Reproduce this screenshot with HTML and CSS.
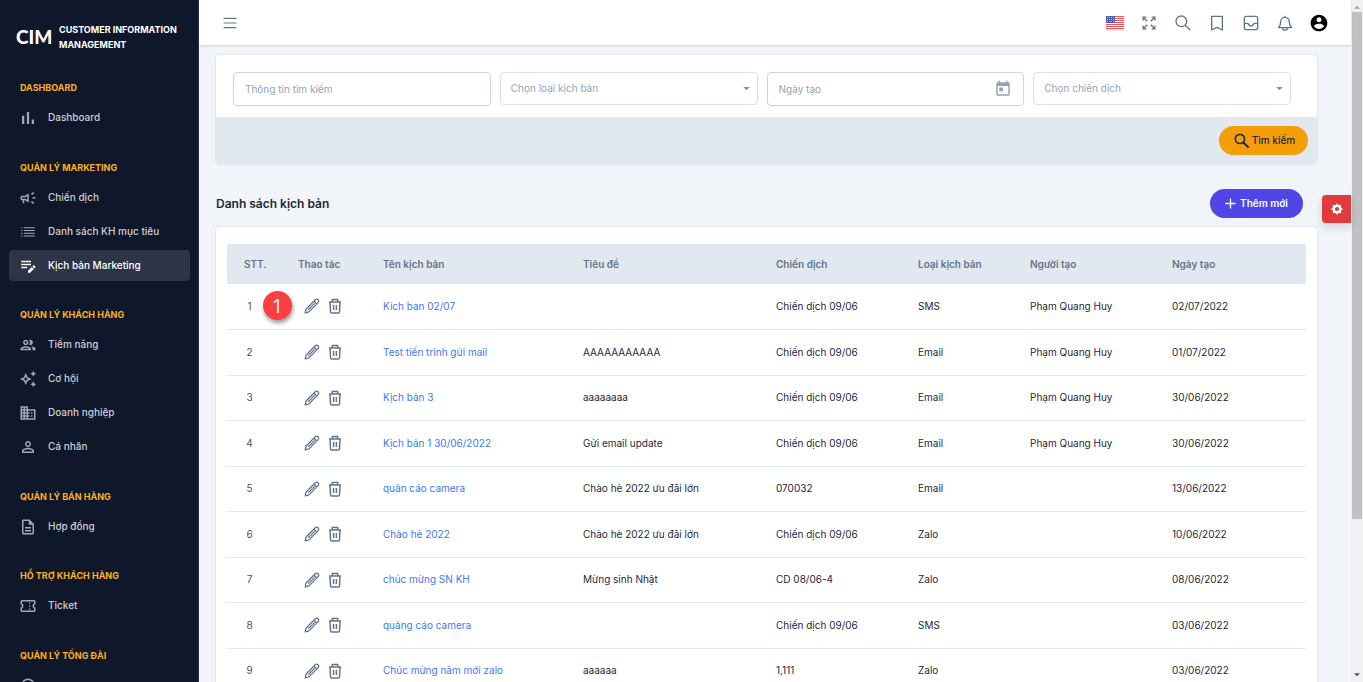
FILE: index.html
```html
<!DOCTYPE html>
<html lang="vi">
<head>
<meta charset="utf-8">
<meta name="viewport" content="width=device-width, initial-scale=1">
<title>CIM - Danh sách kịch bản</title>
<link rel="stylesheet" href="styles.css">
</head>
<body>
<svg class="sprite" aria-hidden="true">
  <symbol id="i-bars" viewBox="0 0 24 24"><path d="M4 9h3v11H4zM10.500 4h3v16h-3zM17 14h3v6h-3z"/></symbol>
  <symbol id="i-horn" viewBox="0 0 24 24"><path d="M18 11v2h4v-2h-4zm-2 6.610c.96.710 2.210 1.650 3.200 2.390.4-.53.8-1.070 1.200-1.600-.99-.74-2.240-1.680-3.200-2.400-.4.540-.8 1.080-1.200 1.610zM20.400 5.600c-.4-.53-.8-1.070-1.200-1.600-.99.740-2.240 1.680-3.200 2.400.4.530.8 1.070 1.200 1.600.96-.72 2.210-1.650 3.200-2.400zM4 9c-1.100 0-2 .9-2 2v2c0 1.100.9 2 2 2h1v4h2v-4h1l5 3V6L8 9H4zm5.030 1.710L11 9.530v4.940l-1.970-1.180-.48-.29H4v-2h4.550l.48-.29z"/></symbol>
  <symbol id="i-list" viewBox="0 0 24 24"><path d="M3 5.500h1.600v1.600H3zM3 9.200h1.600v1.600H3zM3 12.900h1.600v1.600H3zM3 16.600h1.600v1.600H3zM6.500 5.500H21v1.500H6.500zM6.500 9.200H21v1.500H6.500zM6.500 12.900H21v1.500H6.500zM6.500 16.600H21v1.500H6.500z"/></symbol>
  <symbol id="i-note" viewBox="0 0 24 24"><path d="M3 5h13v2H3zM3 9h13v2H3zM3 13h8v2H3zM21.700 12.700l-1.400-1.400a1 1 0 0 0-1.400 0l-1.100 1.100 2.800 2.800 1.100-1.100a1 1 0 0 0 0-1.400zM12 18.200V21h2.800l5-5-2.800-2.800z"/></symbol>
  <symbol id="i-group" viewBox="0 0 24 24"><path d="M9 13.750c-2.340 0-7 1.170-7 3.500V19h14v-1.750c0-2.330-4.660-3.500-7-3.500zM4.340 17c.84-.58 2.870-1.250 4.660-1.250s3.820.67 4.660 1.250H4.340zM9 12c1.930 0 3.500-1.570 3.500-3.500S10.930 5 9 5 5.500 6.570 5.500 8.500 7.070 12 9 12zm0-5c.83 0 1.500.67 1.500 1.500S9.830 10 9 10s-1.500-.67-1.500-1.500S8.170 7 9 7zm7.040 6.810c1.160.84 1.960 1.960 1.960 3.440V19h4v-1.750c0-2.020-3.500-3.170-5.960-3.440zM15 12c1.930 0 3.500-1.570 3.500-3.500S16.930 5 15 5c-.54 0-1.040.13-1.500.35.63.89 1 1.980 1 3.150s-.37 2.260-1 3.150c.46.22.96.35 1.500.35z"/></symbol>
  <symbol id="i-spark" viewBox="0 0 24 24"><path d="M19 9l1.250-2.750L23 5l-2.750-1.250L19 1l-1.250 2.750L15 5l2.750 1.250L19 9zm0 6l-1.250 2.750L15 19l2.750 1.250L19 23l1.250-2.750L23 19l-2.750-1.250L19 15zm-7.500-5.500L9 4 6.500 9.500 1 12l5.500 2.500L9 20l2.500-5.500L17 12l-5.500-2.500zm-1.510 3.490L9 15.170l-.99-2.180L5.830 12l2.180-.99L9 8.830l.99 2.180 2.180.99-2.180.99z"/></symbol>
  <symbol id="i-building" viewBox="0 0 24 24"><path d="M12 7V3H2v18h20V7H12zM6 19H4v-2h2v2zm0-4H4v-2h2v2zm0-4H4V9h2v2zm0-4H4V5h2v2zm4 12H8v-2h2v2zm0-4H8v-2h2v2zm0-4H8V9h2v2zm0-4H8V5h2v2zm10 12h-8v-2h2v-2h-2v-2h2v-2h-2V9h8v10zm-2-8h-2v2h2v-2zm0 4h-2v2h2v-2z"/></symbol>
  <symbol id="i-person" viewBox="0 0 24 24"><path d="M12 5.900a2.100 2.100 0 1 1 0 4.200 2.100 2.100 0 0 1 0-4.200m0 9c2.970 0 6.100 1.460 6.100 2.100v1.100H5.900V17c0-.64 3.130-2.100 6.100-2.100M12 4C9.790 4 8 5.790 8 8s1.790 4 4 4 4-1.790 4-4-1.790-4-4-4zm0 9c-2.670 0-8 1.340-8 4v3h16v-3c0-2.660-5.330-4-8-4z"/></symbol>
  <symbol id="i-doc" viewBox="0 0 24 24"><path d="M8 16h8v2H8zm0-4h8v2H8zm6-10H6c-1.100 0-2 .9-2 2v16c0 1.100.89 2 1.990 2H18c1.100 0 2-.9 2-2V8l-6-6zm4 18H6V4h7v5h5v11z"/></symbol>
  <symbol id="i-ticket" viewBox="0 0 24 24"><path d="M22 10V6c0-1.110-.9-2-2-2H4c-1.100 0-1.990.89-1.990 2v4c1.100 0 1.990.9 1.990 2s-.89 2-2 2v4c0 1.100.9 2 2 2h16c1.100 0 2-.9 2-2v-4c-1.100 0-2-.9-2-2s.9-2 2-2zm-2-1.460c-1.190.69-2 1.990-2 3.460s.81 2.770 2 3.460V18H4v-2.540c1.190-.69 2-1.990 2-3.460 0-1.480-.8-2.770-1.990-3.460L4 6h16v2.540zM13.500 15h1.500v2h-1.500zm0-4h1.500v2h-1.500zm0-4h1.500v2h-1.500z"/></symbol>
  <symbol id="i-agent" viewBox="0 0 24 24"><path d="M12 2a9 9 0 0 0-9 9v8h5v-7H5v-1a7 7 0 0 1 14 0v1h-3v7h5v-8a9 9 0 0 0-9-9z"/></symbol>
  <symbol id="i-menu" viewBox="0 0 24 24"><path d="M1 4h22M1 12h22M1 20h22" fill="none" stroke="currentColor" stroke-width="2"/></symbol>
  <symbol id="i-expand" viewBox="0 0 24 24"><path d="M2 7.500V2h5.500M2 2l7 7M16.500 2H22v5.500M22 2l-7 7M2 16.500V22h5.500M2 22l7-7M22 16.500V22h-5.500M22 22l-7-7" fill="none" stroke="currentColor" stroke-width="2.400"/></symbol>
  <symbol id="i-search" viewBox="0 0 24 24"><circle cx="9.500" cy="9.500" r="8" fill="none" stroke="currentColor" stroke-width="2"/><path d="M15.200 15.200L23 23" fill="none" stroke="currentColor" stroke-width="2"/></symbol>
  <symbol id="i-search-bold" viewBox="0 0 24 24"><circle cx="9.500" cy="9.500" r="5.500" fill="none" stroke="currentColor" stroke-width="2"/><path d="M13.500 13.500l6.500 6.500" fill="none" stroke="currentColor" stroke-width="2.400"/></symbol>
  <symbol id="i-bookmark" viewBox="0 0 24 24"><path d="M4 2h16v20.500l-8-4-8 4z" fill="none" stroke="currentColor" stroke-width="2" stroke-linejoin="round"/></symbol>
  <symbol id="i-inbox" viewBox="0 0 24 24"><rect x="2" y="2" width="20" height="20" rx="3" fill="none" stroke="currentColor" stroke-width="2"/><path d="M2 12.500h5c1.300 0 1.300 4 5 4s3.700-4 5-4h5" fill="none" stroke="currentColor" stroke-width="2"/></symbol>
  <symbol id="i-bell" viewBox="0 0 24 24"><path d="M2 19c2.500-2 3.500-4 3.500-9a6.500 6.500 0 0 1 13 0c0 5 1 7 3.500 9zM12 3.500V1M8.500 20c.3 3.600 6.700 3.600 7 0" fill="none" stroke="currentColor" stroke-width="2" stroke-linejoin="round"/></symbol>
  <symbol id="i-user" viewBox="0 0 24 24"><path d="M12 2C6.480 2 2 6.480 2 12s4.480 10 10 10 10-4.480 10-10S17.520 2 12 2zm0 3c1.660 0 3 1.340 3 3s-1.340 3-3 3-3-1.340-3-3 1.340-3 3-3zm0 14.200c-2.500 0-4.710-1.280-6-3.220.03-1.990 4-3.080 6-3.080 1.990 0 5.970 1.090 6 3.080-1.290 1.940-3.500 3.220-6 3.220z"/></symbol>
  <symbol id="i-calendar" viewBox="0 0 24 24"><path d="M19 3h-1V1h-2v2H8V1H6v2H5c-1.110 0-1.990.9-1.990 2L3 19c0 1.100.89 2 2 2h14c1.100 0 2-.9 2-2V5c0-1.100-.9-2-2-2zm0 16H5V8h14v11zM7 10h5v5H7z"/></symbol>
  <symbol id="i-caret" viewBox="0 0 10 6"><path d="M0 0h10L5 5z"/></symbol>
  <symbol id="i-plus" viewBox="0 0 12 12"><path d="M6 1v10M1 6h10" fill="none" stroke="currentColor" stroke-width="1.400" stroke-linecap="round"/></symbol>
  <symbol id="i-gear" viewBox="0 0 20 20"><path fill-rule="evenodd" d="M11.490 3.170c-.38-1.560-2.600-1.560-2.980 0a1.532 1.532 0 01-2.286.948c-1.372-.836-2.942.734-2.106 2.106.540.886.061 2.042-.947 2.287-1.561.379-1.561 2.600 0 2.978a1.532 1.532 0 01.947 2.287c-.836 1.372.734 2.942 2.106 2.106a1.532 1.532 0 012.287.947c.379 1.561 2.600 1.561 2.978 0a1.533 1.533 0 012.287-.947c1.372.836 2.942-.734 2.106-2.106a1.533 1.533 0 01.947-2.287c1.561-.379 1.561-2.600 0-2.978a1.532 1.532 0 01-.947-2.287c.836-1.372-.734-2.942-2.106-2.106a1.532 1.532 0 01-2.287-.947zM10 13a3 3 0 100-6 3 3 0 000 6z"/></symbol>
  <symbol id="i-edit" viewBox="0 0 16 16"><path d="M1.200 14.800l.9-3.800L11.300 1.800a1.900 1.900 0 0 1 2.800 2.800L5 13.900zM10 3.200L12.800 6M10.600 5.400L4.300 11.700" fill="none" stroke="currentColor" stroke-width="1.300" stroke-linejoin="round"/></symbol>
  <symbol id="i-trash" viewBox="0 0 16 16"><path d="M2 4h12M5.300 4V1.500h5.400V4M3 4l.5 9.800a1.300 1.300 0 0 0 1.300 1.200h6.400a1.300 1.300 0 0 0 1.300-1.200L13 4M6.600 7v5M9.400 7v5" fill="none" stroke="currentColor" stroke-width="1.500" stroke-linejoin="round"/></symbol>
  <symbol id="i-flag" viewBox="0 0 18 13"><path fill="#f5f5f5" d="M0 0h18v13H0z"/><path fill="#e25c60" d="M0 0h18v1H0zM0 2h18v1H0zM0 4h18v1H0zM0 6h18v1H0zM0 8h18v1H0zM0 10h18v1H0zM0 12h18v1H0z"/><path fill="#4a5aa8" d="M0 0h9v7H0z"/><path d="M1 1.500h8M1 3.500h8M1 5.500h8" stroke="#b9c2e2" stroke-dasharray="1 1"/></symbol>
</svg>

<div class="app">
  <aside class="sidebar">
    <div class="brand">
      <span class="brand-logo">CIM</span>
      <span class="brand-name">CUSTOMER INFORMATION MANAGEMENT</span>
    </div>
    <nav class="menu">
      <section class="menu-group">
        <h2 class="menu-title">DASHBOARD</h2>
        <a class="menu-item" href="#"><svg class="menu-icon"><use href="#i-bars"/></svg>Dashboard</a>
      </section>
      <section class="menu-group">
        <h2 class="menu-title">QUẢN LÝ MARKETING</h2>
        <a class="menu-item" href="#"><svg class="menu-icon"><use href="#i-horn"/></svg>Chiến dịch</a>
        <a class="menu-item" href="#"><svg class="menu-icon"><use href="#i-list"/></svg>Danh sách KH mục tiêu</a>
        <a class="menu-item menu-item-active" href="#"><svg class="menu-icon"><use href="#i-note"/></svg>Kịch bản Marketing</a>
      </section>
      <section class="menu-group">
        <h2 class="menu-title">QUẢN LÝ KHÁCH HÀNG</h2>
        <a class="menu-item" href="#"><svg class="menu-icon"><use href="#i-group"/></svg>Tiềm năng</a>
        <a class="menu-item" href="#"><svg class="menu-icon"><use href="#i-spark"/></svg>Cơ hội</a>
        <a class="menu-item" href="#"><svg class="menu-icon"><use href="#i-building"/></svg>Doanh nghiệp</a>
        <a class="menu-item" href="#"><svg class="menu-icon"><use href="#i-person"/></svg>Cá nhân</a>
      </section>
      <section class="menu-group">
        <h2 class="menu-title">QUẢN LÝ BÁN HÀNG</h2>
        <a class="menu-item" href="#"><svg class="menu-icon"><use href="#i-doc"/></svg>Hợp đồng</a>
      </section>
      <section class="menu-group">
        <h2 class="menu-title">HỖ TRỢ KHÁCH HÀNG</h2>
        <a class="menu-item" href="#"><svg class="menu-icon"><use href="#i-ticket"/></svg>Ticket</a>
      </section>
      <section class="menu-group">
        <h2 class="menu-title">QUẢN LÝ TỔNG ĐÀI</h2>
        <a class="menu-item" href="#" aria-label="Agent"><svg class="menu-icon"><use href="#i-agent"/></svg></a>
      </section>
    </nav>
  </aside>

  <div class="page">
    <header class="topbar">
      <button class="icon-button" type="button" aria-label="Menu"><svg class="icon-small"><use href="#i-menu"/></svg></button>
      <div class="topbar-tools">
        <button class="icon-button" type="button" aria-label="English"><svg class="flag"><use href="#i-flag"/></svg></button>
        <button class="icon-button" type="button" aria-label="Fullscreen"><svg class="icon-small"><use href="#i-expand"/></svg></button>
        <button class="icon-button" type="button" aria-label="Search"><svg class="icon-medium"><use href="#i-search"/></svg></button>
        <button class="icon-button" type="button" aria-label="Bookmarks"><svg class="icon-medium"><use href="#i-bookmark"/></svg></button>
        <button class="icon-button" type="button" aria-label="Messages"><svg class="icon-medium"><use href="#i-inbox"/></svg></button>
        <button class="icon-button" type="button" aria-label="Notifications"><svg class="icon-medium"><use href="#i-bell"/></svg></button>
        <button class="icon-button icon-button-user" type="button" aria-label="Account"><svg class="icon-large"><use href="#i-user"/></svg></button>
      </div>
    </header>

    <main class="content">
      <form class="card filter">
        <div class="filter-fields">
          <div class="field field-text"><input class="field-input" type="text" placeholder="Thông tin tìm kiếm" aria-label="Thông tin tìm kiếm"></div>
          <div class="field"><select class="field-select" aria-label="Chọn loại kịch bản"><option>Chọn loại kịch bản</option></select><svg class="field-caret"><use href="#i-caret"/></svg></div>
          <div class="field field-text"><input class="field-input" type="text" placeholder="Ngày tạo" aria-label="Ngày tạo"><button class="field-button" type="button" aria-label="Calendar"><svg class="icon-calendar"><use href="#i-calendar"/></svg></button></div>
          <div class="field"><select class="field-select" aria-label="Chọn chiến dịch"><option>Chọn chiến dịch</option></select><svg class="field-caret"><use href="#i-caret"/></svg></div>
        </div>
        <div class="filter-actions">
          <button class="button button-search" type="button"><svg class="icon-large"><use href="#i-search-bold"/></svg>Tìm kiếm</button>
        </div>
      </form>

      <div class="heading">
        <h1 class="heading-title">Danh sách kịch bản</h1>
        <button class="button button-add" type="button"><svg class="icon-plus"><use href="#i-plus"/></svg>Thêm mới</button>
      </div>

      <section class="card list">
        <table class="table">
          <colgroup><col class="col-no"><col class="col-actions"><col class="col-name"><col class="col-subject"><col class="col-campaign"><col class="col-type"><col class="col-author"><col></colgroup>
          <thead>
            <tr><th>STT.</th><th>Thao tác</th><th>Tên kịch bản</th><th>Tiêu đề</th><th>Chiến dịch</th><th>Loại kịch bản</th><th>Người tạo</th><th>Ngày tạo</th></tr>
          </thead>
          <tbody>
            <tr><td class="cell-no">1</td><td class="cell-actions"><span class="step-badge">1</span><div class="actions"><button class="action" type="button" aria-label="Sửa"><svg class="icon-action"><use href="#i-edit"/></svg></button><button class="action" type="button" aria-label="Xóa"><svg class="icon-action"><use href="#i-trash"/></svg></button></div></td><td><a class="link" href="#">Kich ban 02/07</a></td><td></td><td>Chiến dịch 09/06</td><td>SMS</td><td>Phạm Quang Huy</td><td>02/07/2022</td></tr>
            <tr><td class="cell-no">2</td><td><div class="actions"><button class="action" type="button" aria-label="Sửa"><svg class="icon-action"><use href="#i-edit"/></svg></button><button class="action" type="button" aria-label="Xóa"><svg class="icon-action"><use href="#i-trash"/></svg></button></div></td><td><a class="link" href="#">Test tiến trình gửi mail</a></td><td>AAAAAAAAAAA</td><td>Chiến dịch 09/06</td><td>Email</td><td>Phạm Quang Huy</td><td>01/07/2022</td></tr>
            <tr><td class="cell-no">3</td><td><div class="actions"><button class="action" type="button" aria-label="Sửa"><svg class="icon-action"><use href="#i-edit"/></svg></button><button class="action" type="button" aria-label="Xóa"><svg class="icon-action"><use href="#i-trash"/></svg></button></div></td><td><a class="link" href="#">Kịch bản 3</a></td><td>aaaaaaaa</td><td>Chiến dịch 09/06</td><td>Email</td><td>Phạm Quang Huy</td><td>30/06/2022</td></tr>
            <tr><td class="cell-no">4</td><td><div class="actions"><button class="action" type="button" aria-label="Sửa"><svg class="icon-action"><use href="#i-edit"/></svg></button><button class="action" type="button" aria-label="Xóa"><svg class="icon-action"><use href="#i-trash"/></svg></button></div></td><td><a class="link" href="#">Kịch bản 1 30/06/2022</a></td><td>Gửi email update</td><td>Chiến dịch 09/06</td><td>Email</td><td>Phạm Quang Huy</td><td>30/06/2022</td></tr>
            <tr><td class="cell-no">5</td><td><div class="actions"><button class="action" type="button" aria-label="Sửa"><svg class="icon-action"><use href="#i-edit"/></svg></button><button class="action" type="button" aria-label="Xóa"><svg class="icon-action"><use href="#i-trash"/></svg></button></div></td><td><a class="link" href="#">quản cáo camera</a></td><td>Chào hè 2022 ưu đãi lớn</td><td>070032</td><td>Email</td><td></td><td>13/06/2022</td></tr>
            <tr><td class="cell-no">6</td><td><div class="actions"><button class="action" type="button" aria-label="Sửa"><svg class="icon-action"><use href="#i-edit"/></svg></button><button class="action" type="button" aria-label="Xóa"><svg class="icon-action"><use href="#i-trash"/></svg></button></div></td><td><a class="link" href="#">Chào hè 2022</a></td><td>Chào hè 2022 ưu đãi lớn</td><td>Chiến dịch 09/06</td><td>Zalo</td><td></td><td>10/06/2022</td></tr>
            <tr><td class="cell-no">7</td><td><div class="actions"><button class="action" type="button" aria-label="Sửa"><svg class="icon-action"><use href="#i-edit"/></svg></button><button class="action" type="button" aria-label="Xóa"><svg class="icon-action"><use href="#i-trash"/></svg></button></div></td><td><a class="link" href="#">chúc mừng SN KH</a></td><td>Mừng sinh Nhật</td><td>CD 08/06-4</td><td>Zalo</td><td></td><td>08/06/2022</td></tr>
            <tr><td class="cell-no">8</td><td><div class="actions"><button class="action" type="button" aria-label="Sửa"><svg class="icon-action"><use href="#i-edit"/></svg></button><button class="action" type="button" aria-label="Xóa"><svg class="icon-action"><use href="#i-trash"/></svg></button></div></td><td><a class="link" href="#">quảng cáo camera</a></td><td></td><td>Chiến dịch 09/06</td><td>SMS</td><td></td><td>03/06/2022</td></tr>
            <tr><td class="cell-no">9</td><td><div class="actions"><button class="action" type="button" aria-label="Sửa"><svg class="icon-action"><use href="#i-edit"/></svg></button><button class="action" type="button" aria-label="Xóa"><svg class="icon-action"><use href="#i-trash"/></svg></button></div></td><td><a class="link" href="#">Chúc mừng năm mới zalo</a></td><td>aaaaaa</td><td>1,111</td><td>Zalo</td><td></td><td>03/06/2022</td></tr>
          </tbody>
        </table>
      </section>
    </main>

    <button class="settings" type="button" aria-label="Settings"><svg class="icon-small"><use href="#i-gear"/></svg></button>
  </div>

  <div class="scrollbar" aria-hidden="true">
    <svg class="scroll-arrow scroll-arrow-up"><use href="#i-caret"/></svg>
    <div class="scroll-track"><div class="scroll-thumb"></div></div>
    <svg class="scroll-arrow"><use href="#i-caret"/></svg>
  </div>
</div>
</body>
</html>
```
FILE: styles.css
```css
* {
  box-sizing: border-box;
}

body {
  margin: 0;
  color: #1e293b;
  background: #f1f5f9;
  font: 10px/15px Inter, "Noto Sans", sans-serif;
}

button, input, select {
  margin: 0;
  padding: 0;
  border: 0;
  background: none;
  color: inherit;
  font: inherit;
}

svg {
  display: block;
  flex: none;
  fill: currentColor;
}

.sprite {
  position: absolute;
  width: 0;
  height: 0;
}

.app {
  display: flex;
  height: 100vh;
  overflow: hidden;
}

/* Sidebar */
.sidebar {
  flex: none;
  width: 199px;
  overflow: hidden;
  background: #0f172a;
  border-right: 1px solid #2b3346;
}

.brand {
  display: flex;
  align-items: center;
  gap: 5px;
  height: 80px;
  padding: 0 8px 6px 16px;
}

.brand-logo {
  width: 38px;
  color: #fff;
  font: 900 19px/20px Lato, sans-serif;
}

.brand-name {
  flex: 1;
  color: #fff;
  font-size: 9px;
  font-weight: 700;
}

.menu-group {
  margin-bottom: 26px;
}

.menu-group:nth-child(odd) {
  margin-bottom: 27px;
}

.menu-title {
  margin: 0 0 7px;
  padding-left: 20px;
  color: #fbb01e;
  font-size: 9px;
  font-weight: 700;
  line-height: 15px;
}

.menu-item {
  display: flex;
  align-items: center;
  gap: 11px;
  height: 31px;
  margin: 0 8px 3px 9px;
  padding-left: 10px;
  border-radius: 4px;
  color: #cbced4;
  font-weight: 500;
  text-decoration: none;
}

.menu-item:last-child {
  margin-bottom: 0;
}

.menu-item-active {
  background: #2d3446;
  color: #fff;
}

.menu-icon {
  width: 18px;
  height: 18px;
  color: #a3a7b0;
}

.menu-item-active .menu-icon {
  color: #fff;
}

/* Top bar */
.page {
  position: relative;
  flex: 1;
  min-width: 0;
}

.topbar {
  display: flex;
  align-items: center;
  justify-content: space-between;
  height: 45px;
  padding: 0 15px 0 14px;
  background: #fff;
  box-shadow: 0 1px 2px #0f172a26;
}

.topbar-tools {
  display: flex;
}

.icon-button {
  display: flex;
  align-items: center;
  justify-content: center;
  width: 34px;
  height: 34px;
  color: #64748b;
}

.icon-button-user {
  color: #000;
}

.icon-small {
  width: 14px;
  height: 14px;
}

.icon-medium {
  width: 16px;
  height: 16px;
}

.icon-calendar {
  width: 18px;
  height: 18px;
}

.icon-large {
  width: 20px;
  height: 20px;
}

.flag {
  width: 18px;
  height: 13px;
  box-shadow: 0 1px 2px #0003;
}

/* Content */
.content {
  padding: 10px 34px 0 17px;
}

.card {
  overflow: hidden;
  border-radius: 4px;
  background: #fff;
  box-shadow: 0 0 2px #0f172a33;
}

.filter-fields {
  display: grid;
  grid-template-columns: repeat(4, 1fr);
  align-items: start;
  gap: 9px;
  padding: 17px 26px 11px 17px;
}

.field {
  position: relative;
  display: flex;
  align-items: center;
  height: 33px;
  border: 1px solid #d9e1ea;
  border-radius: 4px;
  color: #94a3b8;
}

.field-text {
  height: 34px;
  border-color: #cbd5e1;
  padding: 0 11px;
  box-shadow: 0 1px 2px #0000000d;
}

.field-input {
  flex: 1;
  min-width: 0;
  height: 100%;
  outline: 0;
}

.field-input::placeholder {
  color: #94a3b8;
  opacity: 1;
}

.field-select {
  width: 100%;
  height: 100%;
  padding: 0 24px 0 10px;
  appearance: none;
}

.field-caret {
  position: absolute;
  right: 7px;
  width: 7px;
  height: 4px;
  color: #8a8f98;
  pointer-events: none;
}

.filter-actions {
  display: flex;
  justify-content: flex-end;
  padding: 9px;
  background: #e2e8f0;
}

.button {
  display: flex;
  align-items: center;
  justify-content: center;
  height: 29px;
  border-radius: 15px;
  font-size: 10px;
  font-weight: 500;
}

.button-search {
  width: 89px;
  background: #f59e0b;
}

.button-add {
  gap: 4px;
  width: 93px;
  background: #4f46e5;
  color: #fff;
  font-weight: 600;
}

.icon-plus {
  width: 11px;
  height: 11px;
}

.heading {
  display: flex;
  align-items: center;
  justify-content: space-between;
  padding: 25px 14px 9px 0;
}

.heading-title {
  margin: 0;
  font-size: 12px;
  font-weight: 600;
  line-height: 18px;
}

/* Table */
.list {
  padding: 17px 11px;
}

.table {
  width: 100%;
  border-collapse: collapse;
  table-layout: fixed;
}

.col-no { width: 54px; }
.col-actions { width: 85px; }
.col-name { width: 200px; }
.col-subject { width: 193px; }
.col-campaign { width: 142px; }
.col-type { width: 112px; }
.col-author { width: 142px; }

.table th {
  height: 40px;
  padding: 0 0 0 17px;
  background: #e2e8f0;
  color: #64748b;
  font-weight: 600;
  text-align: left;
}

.table td {
  height: 45px;
  padding: 0 0 0 17px;
  border-bottom: 1px solid #e2e8f0;
}

.table tr:nth-child(even) td {
  height: 46px;
}

.table .cell-no {
  padding: 0 9px 0 0;
  text-align: center;
  color: #475569;
}

.link {
  color: #3f78f5;
  text-decoration: none;
}

.actions {
  display: flex;
  gap: 7px;
  padding-left: 6px;
}

.action {
  color: #64748b;
}

.icon-action {
  width: 16px;
  height: 16px;
}

.cell-actions {
  position: relative;
}

.step-badge {
  position: absolute;
  top: 7px;
  left: -18px;
  width: 29px;
  height: 29px;
  border-radius: 50%;
  background: #fb3e41;
  box-shadow: 1px 3px 4px #0006;
  color: #fff;
  font: 20px/29px "Open Sans", sans-serif;
  text-align: center;
}

.settings {
  position: absolute;
  top: 195px;
  right: 0;
  display: flex;
  align-items: center;
  justify-content: center;
  width: 29px;
  height: 28px;
  border-radius: 4px 0 0 4px;
  background: #e03a3c;
  box-shadow: 0 4px 8px #0f172a26;
  color: #fff;
}

/* Scrollbar */
.scrollbar {
  display: flex;
  flex: none;
  flex-direction: column;
  align-items: center;
  width: 12px;
  padding: 5px 0;
  background: #f1f1f1;
}

.scroll-arrow {
  width: 6px;
  height: 4px;
  color: #505050;
}

.scroll-arrow-up {
  color: #a3a3a3;
  transform: rotate(180deg);
}

.scroll-track {
  flex: 1;
  width: 10px;
  padding: 3px 0;
}

.scroll-thumb {
  height: 77%;
  background: #c1c1c1;
}
```
